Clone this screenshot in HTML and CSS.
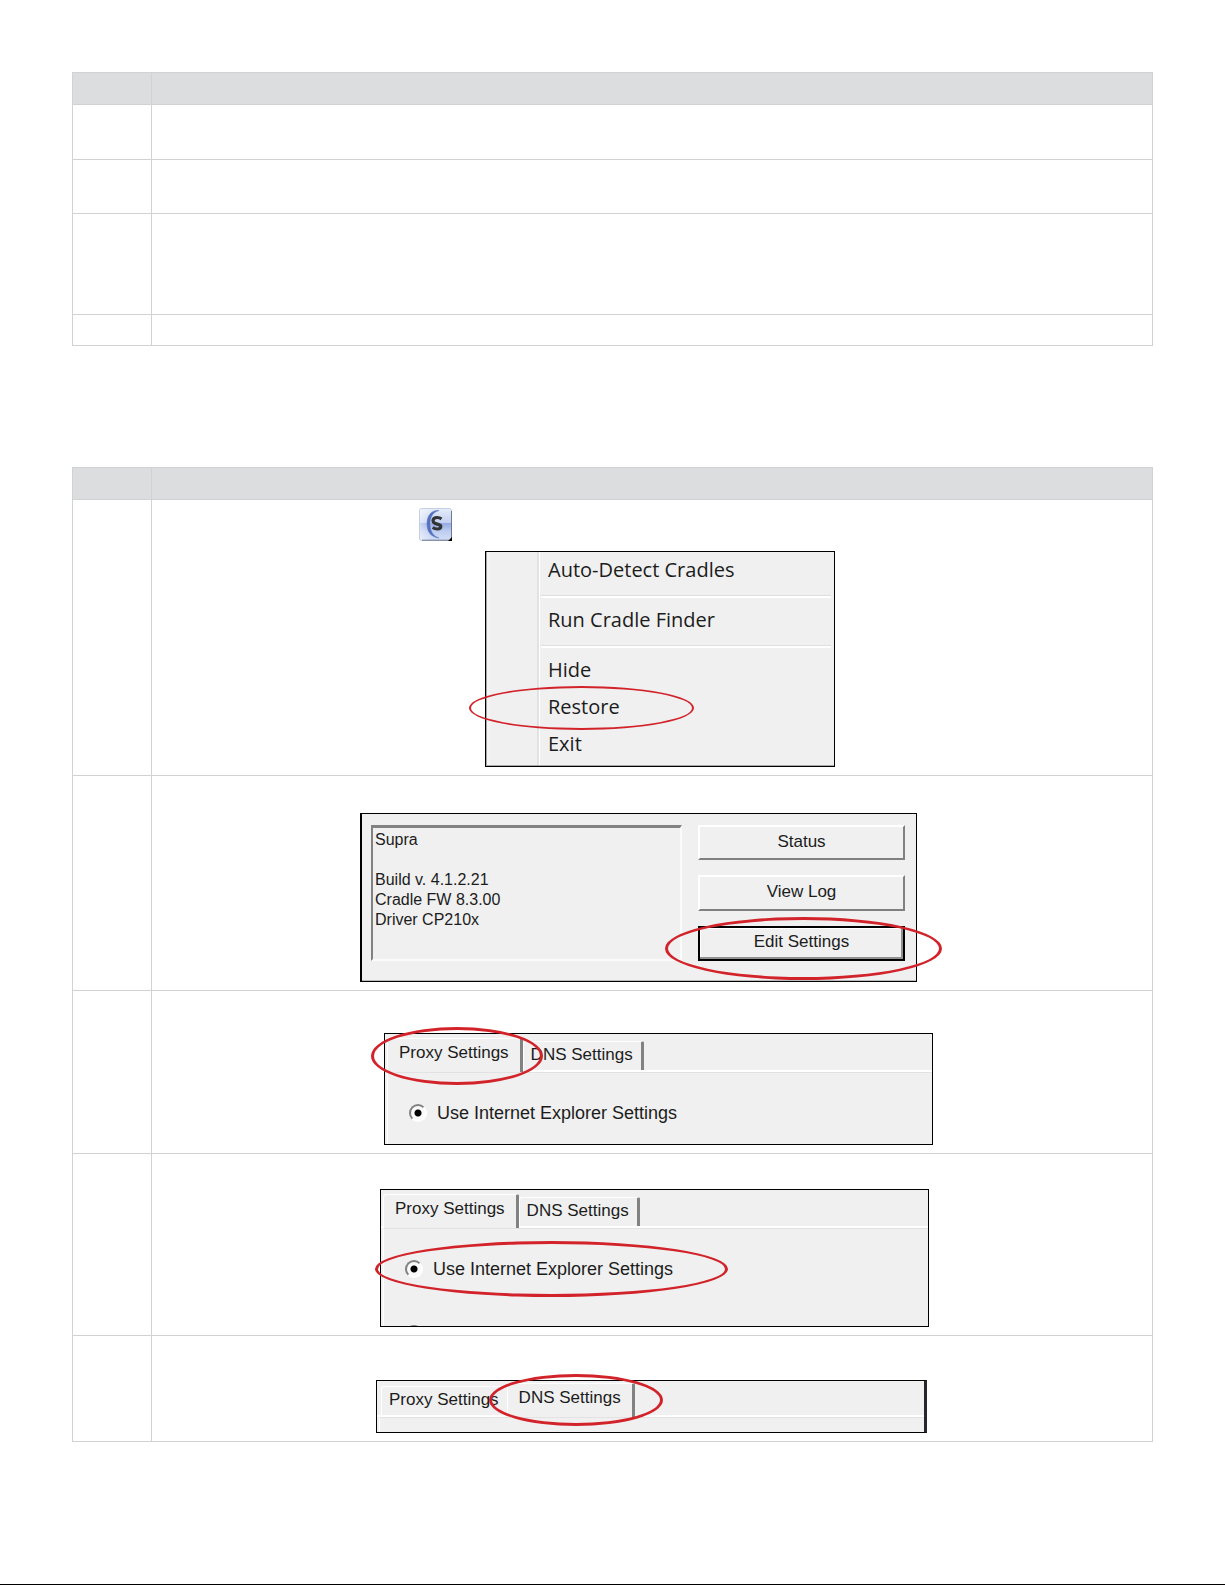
FILE: index.html
```
<!DOCTYPE html>
<html lang="en">
<head>
  <meta charset="UTF-8" />
  <meta name="viewport" content="width=device-width, initial-scale=1.0" />
  <title>Edit Settings</title>
  <link rel="stylesheet" href="styles.css">
</head>
<body>
  <table class="steps">
    <thead>
      <tr class="row-head"><th class="num"></th><th></th></tr>
    </thead>
    <tbody>
      <tr class="row-two-lines"><td></td><td></td></tr>
      <tr class="row-two-lines short"><td></td><td></td></tr>
      <tr class="row-four-lines"><td></td><td></td></tr>
      <tr class="row-one-line"><td></td><td></td></tr>
    </tbody>
  </table>

  <table class="steps">
    <thead>
      <tr class="row-head"><th class="num"></th><th></th></tr>
    </thead>
    <tbody>
      <!-- Restore from the tray icon -->
      <tr class="row-menu">
        <td></td>
        <td>
          <svg class="tray-icon" viewBox="0 0 33 33" width="33" height="33" role="img">
            <defs>
              <linearGradient id="tray" x1="0" y1="0" x2="0" y2="1">
                <stop offset="0" stop-color="#e6edf9" />
                <stop offset="0.44" stop-color="#c3d1f1" />
                <stop offset="0.46" stop-color="#94abe2" />
                <stop offset="0.7" stop-color="#bccbf0" />
                <stop offset="1" stop-color="#d5e0f6" />
              </linearGradient>
              <linearGradient id="shine" x1="0" y1="0" x2="1" y2="0">
                <stop offset="0" stop-color="#fff" stop-opacity="0.5" />
                <stop offset="0.4" stop-color="#fff" stop-opacity="0" />
              </linearGradient>
            </defs>
            <rect x="0.5" y="0.5" width="32" height="32" rx="2" fill="url(#tray)" stroke="#c4cfe6" />
            <rect x="1" y="1" width="31" height="31" rx="2" fill="url(#shine)" />
            <path d="M32.5 3v27M3 32.2h27" stroke="#6d7891" fill="none" />
            <path d="M20 2.500C11 2 8 9 8 16c0 8 4 13 12 14c-6-2-9-7-9-14C11 9 14 4 20 2.500z" fill="#536fbf" stroke="#6a82cb" stroke-width="0.6" />
            <path d="M22.500 10.800c-1.500-1-2.800-1.300-4.300-1.300c-2.500 0-4.200 1.200-4.200 3.200c0 4.400 7.800 2.600 7.800 5.800c0 1.700-1.700 2.500-3.500 2.500c-1.600 0-3.200-.5-4.600-1.500" fill="none" stroke="#333438" stroke-width="3.200" />
            <path d="M29 33l4-4v4z" fill="#000" />
          </svg>
          <div class="figure fig-menu">
            <ul class="menu">
              <li>Auto-Detect Cradles</li>
              <li class="separator"></li>
              <li>Run Cradle Finder</li>
              <li class="separator"></li>
              <li>Hide</li>
              <li>Restore</li>
              <li>Exit</li>
            </ul>
            <div class="ring ring-restore"></div>
          </div>
        </td>
      </tr>
      <!-- Edit Settings -->
      <tr class="row-status">
        <td></td>
        <td>
          <div class="figure fig-status">
            <div class="window status">
              <div class="info">Supra<br><br>Build v. 4.1.2.21<br>Cradle FW 8.3.00<br>Driver CP210x</div>
              <div class="actions">
                <button type="button">Status</button>
                <button type="button">View Log</button>
                <button type="button" class="default">Edit Settings</button>
              </div>
            </div>
            <div class="ring ring-edit"></div>
          </div>
        </td>
      </tr>
      <!-- Proxy Settings tab -->
      <tr class="row-proxy">
        <td></td>
        <td>
          <div class="figure fig-proxy">
            <div class="window">
              <div class="tabs">
                <button type="button" class="tab selected">Proxy Settings</button>
                <button type="button" class="tab">DNS Settings</button>
              </div>
              <div class="panel">
                <label><input type="radio" name="proxy" checked>Use Internet Explorer Settings</label>
              </div>
            </div>
            <div class="ring ring-proxy"></div>
          </div>
        </td>
      </tr>
      <!-- Internet Explorer option -->
      <tr class="row-explorer">
        <td></td>
        <td>
          <div class="figure fig-explorer">
            <div class="window">
              <div class="tabs">
                <button type="button" class="tab selected">Proxy Settings</button>
                <button type="button" class="tab">DNS Settings</button>
              </div>
              <div class="panel">
                <label><input type="radio" name="explorer" checked>Use Internet Explorer Settings</label>
                <input type="radio" name="explorer">
              </div>
            </div>
            <div class="ring ring-explorer"></div>
          </div>
        </td>
      </tr>
      <!-- DNS Settings tab -->
      <tr class="row-dns">
        <td></td>
        <td>
          <div class="figure fig-dns">
            <div class="window">
              <div class="tabs">
                <button type="button" class="tab">Proxy Settings</button>
                <button type="button" class="tab selected">DNS Settings</button>
              </div>
              <div class="panel"></div>
            </div>
            <div class="ring ring-dns"></div>
          </div>
        </td>
      </tr>
    </tbody>
  </table>
</body>
</html>
```
FILE: styles.css
```
* {
  box-sizing: border-box;
}
body {
  margin: 0;
  padding: 72px 72px 0;
  min-height: 100vh;
  border-bottom: 1px solid #000;
  background: #fff;
  color: #1c1c1c;
  font: 17px/20px "Liberation Sans", Arial, sans-serif;
}

/* Step tables */
.steps {
  width: 100%;
  table-layout: fixed;
  border-collapse: separate;
  border-spacing: 0;
  border-top: 1px solid #d1d2d3;
  border-left: 1px solid #d1d2d3;
}
.steps + .steps {
  margin-top: 121px;
}
.steps th,
.steps td {
  padding: 0;
  border-right: 1px solid #d1d2d3;
  border-bottom: 1px solid #d1d2d3;
}
.steps th {
  background: #dcdddf;
}
.steps td {
  padding-bottom: 8px;
  vertical-align: bottom;
}
.num { width: 79px; }
.row-head { height: 32px; }
.row-one-line { height: 31px; }
.row-two-lines { height: 55px; }
.row-two-lines.short { height: 54px; }
.row-four-lines { height: 101px; }
.row-menu { height: 276px; }
.row-status { height: 215px; }
.row-proxy { height: 163px; }
.row-explorer { height: 182px; }
.row-dns { height: 106px; }

.tray-icon {
  display: block;
  margin: 0 0 10px 267px;
}

/* Screen figures */
.figure {
  position: relative;
  display: flex;
}
.fig-menu { width: 350px; height: 216px; margin-left: 333px; }
.fig-status { width: 557px; height: 169px; margin-left: 208px; }
.fig-proxy { width: 549px; height: 112px; margin-left: 232px; }
.fig-explorer { width: 549px; height: 138px; margin-left: 228px; }
.fig-dns { width: 551px; height: 53px; margin-left: 224px; }

.window {
  flex: 1;
  overflow: hidden;
  border: 1px solid #000;
  background: #f0f0f0;
}

/* Tray menu */
.menu {
  flex: 1;
  display: flex;
  flex-direction: column;
  justify-content: flex-end;
  margin: 0;
  padding: 0 3px 4px 53px;
  overflow: hidden;
  list-style: none;
  border: 1px solid #000;
  background: linear-gradient(to right, #a5a5a5 1px, #f5f5f5 1px, #f5f5f5 4px, #f0f0f0 4px, #f0f0f0 51px, #e2e2e2 51px, #e2e2e2 53px, #fff 53px, #fff 54px, #f0f0f0 54px);
  box-shadow: inset 0 -1px #aaa;
  font: 20px/37px "Open Sans", "Noto Sans", sans-serif;
}
.menu li {
  flex: none;
  padding-left: 9px;
}
.menu .separator {
  height: 3px;
  margin: 7px 0 3px 2px;
  padding: 0;
  border-top: 1px solid #dedede;
  border-bottom: 2px solid #fff;
}

/* Status window */
.status {
  display: flex;
  gap: 16px;
  padding: 11px 11px 20px 9px;
  border-left-width: 2px;
  box-shadow: inset 0 -1px #bbb;
}
.info {
  flex: 1;
  padding: 2px;
  border: 2px solid;
  border-color: #828282 #fbfbfb #fbfbfb #828282;
  border-top-width: 3px;
  font-size: 16px;
}
.actions {
  width: 207px;
  display: flex;
  flex-direction: column;
  gap: 15px;
}
.actions button {
  flex: 1;
  padding: 0 0 2px;
  border: 2px solid;
  border-color: #fff #808080 #808080 #fff;
  background: #f0f0f0;
  color: inherit;
  font: inherit;
}
.actions .default {
  border-color: #000;
  box-shadow: inset -2px -2px #909090, inset 1px 1px #fff;
}

/* Settings tabs */
.tabs {
  display: flex;
  align-items: flex-end;
  height: 38px;
  padding-left: 2px;
  border-bottom: 2px solid #fff;
}
.tab {
  height: 29px;
  padding: 3px 8px 0 7px;
  border: 1px solid #fff;
  border-right: 3px solid #828282;
  border-bottom: 0;
  border-radius: 3px 2px 0 0;
  background: #f0f0f0;
  color: inherit;
  font: inherit;
  display: flex;
}
.tab.selected {
  height: 34px;
  margin-bottom: -2px;
  padding: 4px 11px 0 11px;
}
.tab:has(+ .selected) {
  border-right: 0;
}
.panel {
  display: flex;
  flex-direction: column;
  gap: 46px;
  height: 100%;
  margin-left: 2px;
  padding: 30px 0 0 21px;
  border-left: 1px solid #fff;
  border-top: 1px solid #e2e2e2;
}
.panel label {
  display: flex;
  align-items: center;
  gap: 10px;
  font-size: 18px;
}
.panel input {
  appearance: none;
  flex: none;
  width: 18px;
  height: 18px;
  margin: 0;
  border: 2px solid;
  border-color: #828282 #fff #fff #828282;
  border-radius: 50%;
  background: #fafafa;
}
.panel input:checked {
  background: radial-gradient(circle, #000 3px, #fafafa 4px);
}
.fig-dns .tabs {
  height: 36px;
  padding-left: 4px;
}
.fig-dns .window {
  border-right: 3px solid #26262c;
}

/* Red markers over the figures */
.ring {
  position: absolute;
  border: 3px solid #d2232a;
  border-radius: 50%;
}
.ring-restore { left: -16px; top: 135px; width: 225px; height: 44px; border-width: 2px; }
.ring-edit { left: 305px; top: 104px; width: 277px; height: 63px; }
.ring-proxy { left: -13px; top: -6px; width: 172px; height: 58px; }
.ring-explorer { left: -5px; top: 52px; width: 353px; height: 56px; }
.ring-dns { left: 113px; top: -6px; width: 174px; height: 52px; }
```
